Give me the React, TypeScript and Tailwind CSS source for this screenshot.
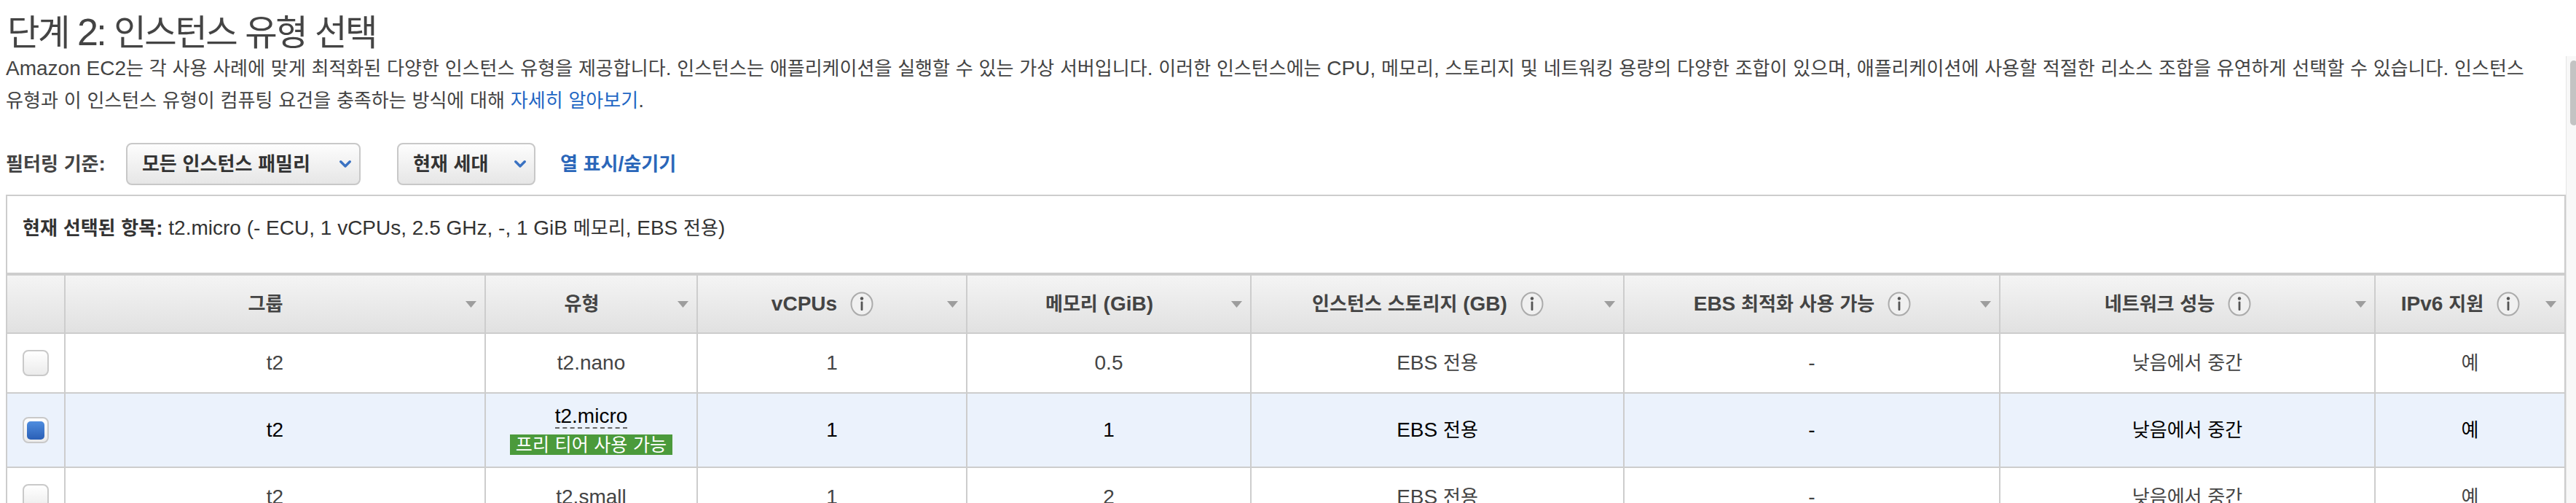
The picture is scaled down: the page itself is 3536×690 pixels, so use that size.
import React from "react";

const HANGUL = /([\u1100-\u11FF\u3130-\u318F\uAC00-\uD7AF]+)/;

// Hangul runs get a smaller size so Noto CJK matches the narrower Apple Korean font
function K({ t }: { t: string }) {
  return (
    <>
      {t.split(HANGUL).map((s, i) =>
        HANGUL.test(s) ? (
          <span key={i} className="text-[0.93em]">{s}</span>
        ) : (
          <React.Fragment key={i}>{s}</React.Fragment>
        )
      )}
    </>
  );
}

function InfoIcon() {
  return (
    <svg width="32" height="34" viewBox="0 0 32 34" className="shrink-0">
      <ellipse cx="16" cy="17" rx="14.5" ry="15.5" fill="#f0f0f0" stroke="#ababab" strokeWidth="2" />
      <circle cx="16" cy="9.5" r="2.2" fill="#555" />
      <rect x="14.6" y="13.5" width="2.8" height="12.5" rx="1" fill="#555" />
    </svg>
  );
}

function SortArrow() {
  return (
    <svg width="15" height="9" viewBox="0 0 15 9" className="shrink-0">
      <path d="M0 0h15L7.5 9z" fill="#9d9d9d" />
    </svg>
  );
}

function Chevron() {
  return (
    <svg width="16" height="10" viewBox="0 0 16 10" className="shrink-0">
      <path d="M1.8 1.8 8 8l6.2-6.2" fill="none" stroke="#3a72c2" strokeWidth="3.4" strokeLinecap="round" strokeLinejoin="round" />
    </svg>
  );
}

function Checkbox({ checked }: { checked?: boolean }) {
  return (
    <div className="flex h-[36px] w-[36px] items-center justify-center rounded-[8px] border-2 border-[#c9c9c9] bg-linear-to-b from-[#ffffff] to-[#ebebeb]">
      {checked && <div className="h-[25px] w-[24px] rounded-[5px] bg-linear-to-b from-[#4f8ddf] to-[#2a5fb6]" />}
    </div>
  );
}

function Dropdown({ label, width }: { label: string; width: string }) {
  return (
    <div className={`flex h-[58px] items-center justify-between rounded-[8px] border-2 border-[#c8c8c8] bg-linear-to-b from-[#fdfdfd] to-[#e6e6e6] pl-[20px] pr-[11px] font-bold text-[#333] ${width}`}>
      <span><K t={label} /></span>
      <Chevron />
    </div>
  );
}

const cols = "grid grid-cols-[78px_577px_291px_370px_390px_512px_516px_515px_1fr]";

const headers = [
  { label: "그룹" },
  { label: "유형" },
  { label: "vCPUs", info: true },
  { label: "메모리 (GiB)" },
  { label: "인스턴스 스토리지 (GB)", info: true },
  { label: "EBS 최적화 사용 가능", info: true },
  { label: "네트워크 성능", info: true },
  { label: "IPv6 지원", info: true },
];

const rows = [
  { type: "t2.nano", vcpu: "1", mem: "0.5", h: "h-[82px]" },
  { type: "t2.micro", vcpu: "1", mem: "1", h: "h-[102px]", selected: true },
  { type: "t2.small", vcpu: "1", mem: "2", h: "h-[82px]" },
];

const line1 =
  "Amazon EC2는 각 사용 사례에 맞게 최적화된 다양한 인스턴스 유형을 제공합니다. 인스턴스는 애플리케이션을 실행할 수 있는 가상 서버입니다. 이러한 인스턴스에는 CPU, 메모리, 스토리지 및 네트워킹 용량의 다양한 조합이 있으며, 애플리케이션에 사용할 적절한 리소스 조합을 유연하게 선택할 수 있습니다. 인스턴스";
const line2 = "유형과 이 인스턴스 유형이 컴퓨팅 요건을 충족하는 방식에 대해 ";

export default function App() {
  return (
    <div className="flex h-[690px] w-[3536px] overflow-hidden bg-white font-['Liberation_Sans','Noto_Sans_CJK_KR',sans-serif] text-[28px] text-[#444]">
      <div className="w-[3522px] shrink-0 pl-[8px]">
        <h1 className="pl-[2px] pt-[19px] text-[52px] font-normal leading-[50px] tracking-[-2.5px] text-[#444]">
          <K t="단계 2: 인스턴스 유형 선택" />
        </h1>
        <p className="mt-[2px] whitespace-nowrap leading-[44px]">
          <K t={line1} />
          <br />
          <K t={line2} />
          <a className="text-[#1f67c4]"><K t="자세히 알아보기" /></a>.
        </p>

        <div className="mt-[36px] flex h-[58px] items-center">
          <span className="font-bold text-[#444]"><K t="필터링 기준:" /></span>
          <div className="ml-[28px]"><Dropdown label="모든 인스턴스 패밀리" width="w-[322px]" /></div>
          <div className="ml-[50px]"><Dropdown label="현재 세대" width="w-[190px]" /></div>
          <a className="ml-[34px] font-bold text-[#2a66b9]"><K t="열 표시/숨기기" /></a>
        </div>

        <div className="mt-[13px] h-[107px] border-x-2 border-t-2 border-[#cdcdcd] pl-[21px] pt-[27px] leading-[34px] text-[#333]">
          <b className="font-bold"><K t="현재 선택된 항목:" /></b>
          <K t=" t2.micro (- ECU, 1 vCPUs, 2.5 GHz, -, 1 GiB 메모리, EBS 전용)" />
        </div>

        <div className="border-x-2 border-[#cdcdcd]">
          <div className={`${cols} h-[84px] border-b-2 border-t-4 border-[#cdcdcd] bg-linear-to-b from-[#f4f4f4] to-[#e1e1e1]`}>
            <div />
            {headers.map((h) => (
              <div key={h.label} className="flex items-center border-l-2 border-[#cdcdcd] pr-[11px]">
                <div className="flex flex-1 items-center justify-center gap-[18px] font-bold text-[#444]">
                  <span><K t={h.label} /></span>
                  {h.info && <InfoIcon />}
                </div>
                <SortArrow />
              </div>
            ))}
          </div>

          {rows.map((r) => {
            const cells = ["t2", r.type, r.vcpu, r.mem, "EBS 전용", "-", "낮음에서 중간", "예"];
            return (
              <div
                key={r.type}
                className={`${cols} ${r.h} border-b-2 border-[#cdcdcd] ${r.selected ? "bg-[#ebf2fc] text-black" : "bg-white text-[#444]"}`}
              >
                <div className="flex items-center justify-center">
                  <Checkbox checked={r.selected} />
                </div>
                {cells.map((c, i) => (
                  <div key={i} className="flex flex-col items-center justify-center border-l-2 border-[#cdcdcd]">
                    {i === 1 && r.selected ? (
                      <>
                        <span className="border-b-2 border-dashed border-[#666] leading-[30px]">{c}</span>
                        <span className="mt-[8px] bg-[#4b9a3b] px-[8px] text-[27px] leading-[28px] text-white">
                          <K t="프리 티어 사용 가능" />
                        </span>
                      </>
                    ) : (
                      <span><K t={c} /></span>
                    )}
                  </div>
                ))}
              </div>
            );
          })}
        </div>
      </div>

      <div className="flex-1 pt-[77px]">
        <div className="h-full border-l border-[#e4e4e4] bg-[#f8f8f8] pl-[5px] pt-[6px]">
          <div className="h-[89px] w-[10px] rounded-full bg-[#c3c3c3]" />
        </div>
      </div>
    </div>
  );
}
